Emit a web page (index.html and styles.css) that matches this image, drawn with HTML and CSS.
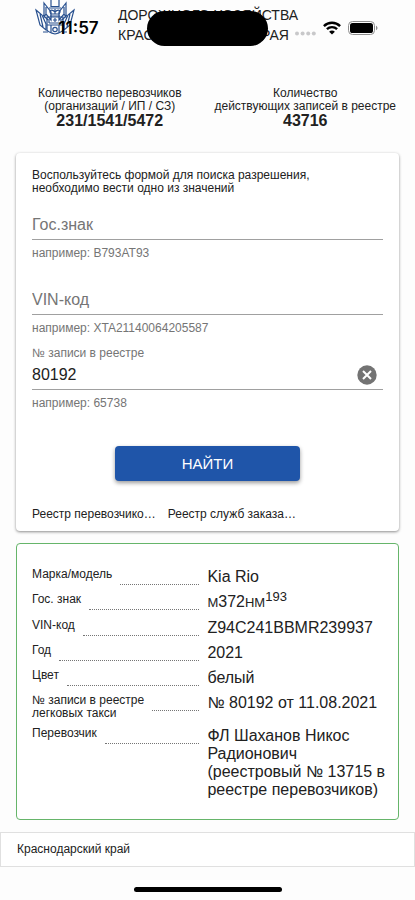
FILE: index.html
```html
<!DOCTYPE html>
<html lang="ru">
<head>
  <meta charset="UTF-8" />
  <meta name="viewport" content="width=device-width, initial-scale=1" />
  <title>Реестр такси</title>
  <link rel="stylesheet" href="styles.css">
</head>
<body>
  <div class="status-bar">
    <span class="time">11:57</span>
    <span class="island"></span>
    <span class="status-icons">
      <svg class="dots" width="21" height="5" viewBox="0 0 21 5" fill="#c8c8ca">
        <circle cx="2" cy="2.5" r="2" /><circle cx="7.6" cy="2.5" r="2" /><circle cx="13.2" cy="2.5" r="2" /><circle cx="18.8" cy="2.5" r="2" />
      </svg>
      <svg width="18" height="14" viewBox="0 0 18 14" fill="none" stroke="#000" stroke-width="2.4">
        <path d="M.9 5.1C5.4.7 12.6.7 17.1 5.1" />
        <path d="M3.9 8.2c2.9-2.8 7.3-2.8 10.2 0" />
        <path d="M9 13.6 6.1 10.7c1.6-1.5 4.2-1.5 5.8 0z" fill="#000" stroke="none" />
      </svg>
      <svg width="30" height="14" viewBox="0 0 30 14">
        <rect x=".5" y=".5" width="26" height="13" rx="4" fill="none" stroke="#8e8e8e" />
        <rect x="2" y="2" width="23" height="10" rx="2.6" />
        <path d="M28 4.8v4.4c.9-.4 1.5-1.2 1.5-2.2S28.9 5.200 28 4.800z" fill="#8e8e8e" />
      </svg>
    </span>
  </div>

  <header class="header">
    <svg class="emblem" width="40" height="35" viewBox="0 0 40 35" fill="none" stroke="#28508f" stroke-width="1.2">
      <!-- crown -->
      <path d="M16 0v6.500h8V0M14 8h12" />
      <path d="M16 14c-3-4 1-5 4-2 3-3 7-2 4 2zM20 9v5M15 16h10" />
      <!-- flags -->
      <path d="M1 10l6 5 4 9v6l-6-5zM5 14l3 13" />
      <path d="M9 3l7 9v8l-5-6-2 3zM11 7v8M8 15l5 5" />
      <path d="M39 10l-6 5-4 9v6l6-5zM35 14l-3 13" />
      <path d="M31 3l-7 9v8l5-6 2 3zM29 7v8M32 15l-5 5" />
      <!-- shield -->
      <path d="M12 17h16v13c-1 2-4 3-8 4-4-1-7-2-8-4zM12 25h16M16 25v8M24 25v8M20 18v4M18 20h4" />
      <path d="M14 19v4M26 19v4M14 23h12M8 32h5M32 32h-5" />
      <circle cx="20" cy="29.500" r="2.200" />
    </svg>
    <div class="header-title">ДОРОЖНОГО ХОЗЯЙСТВА<br>КРАСНОДАРСКОГО КРАЯ</div>
  </header>

  <main>
    <section class="stats">
      <div class="stat">
        <div>Количество перевозчиков<br>(организаций / ИП / СЗ)</div>
        <div class="stat-value">231/1541/5472</div>
      </div>
      <div class="stat">
        <div>Количество<br>действующих записей в реестре</div>
        <div class="stat-value">43716</div>
      </div>
    </section>

    <form class="card search">
      <p class="search-text">Воспользуйтесь формой для поиска разрешения,<br>необходимо вести одно из значений</p>

      <div class="field">
        <input type="text" id="plate" placeholder="Гос.знак" aria-label="Гос.знак" />
        <div class="hint">например: B793AT93</div>
      </div>
      <div class="field">
        <input type="text" id="vin" placeholder="VIN-код" aria-label="VIN-код" />
        <div class="hint">например: XTA21140064205587</div>
      </div>
      <div class="field">
        <label for="record">№ записи в реестре</label>
        <div class="input-row">
          <input type="text" id="record" value="80192" />
          <button type="button" class="clear" aria-label="Очистить">
            <svg width="20" height="20" viewBox="0 0 20 20">
              <circle cx="10" cy="10" r="9.7" fill="#737373" />
              <path d="M6 6l8 8M14 6l-8 8" stroke="#fff" stroke-width="2" />
            </svg>
          </button>
        </div>
        <div class="hint">например: 65738</div>
      </div>

      <button type="button" class="submit">НАЙТИ</button>

      <div class="links">
        <a href="#">Реестр перевозчико…</a>
        <a href="#">Реестр служб заказа…</a>
      </div>
    </form>

    <dl class="card result">
      <div class="row"><dt><span>Марка/модель</span></dt><dd>Kia Rio</dd></div>
      <div class="row"><dt><span>Гос. знак</span></dt><dd><small>М</small>372<small>НМ</small><sup>193</sup></dd></div>
      <div class="row"><dt><span>VIN-код</span></dt><dd>Z94C241BBMR239937</dd></div>
      <div class="row"><dt><span>Год</span></dt><dd>2021</dd></div>
      <div class="row"><dt><span>Цвет</span></dt><dd>белый</dd></div>
      <div class="row"><dt><span>№ записи в реестре<br>легковых такси</span></dt><dd>№ 80192 от 11.08.2021</dd></div>
      <div class="row"><dt><span>Перевозчик</span></dt><dd>ФЛ Шаханов Никос Радионович (реестровый № 13715 в реестре перевозчиков)</dd></div>
    </dl>
  </main>

  <footer class="footer">Краснодарский край</footer>
  <div class="home-indicator"></div>
</body>
</html>
```
FILE: styles.css
```css
* {
  box-sizing: border-box;
}

body {
  margin: 0;
  background: #fdfdfd;
  color: #212121;
  font-family: "Liberation Sans", Arial, sans-serif;
  font-size: 12px;
  line-height: 13px;
}

/* phone status bar, lies over the page header */
.status-bar {
  position: absolute;
  top: 0;
  left: 0;
  width: 100%;
  height: 56px;
  display: grid;
  grid-template-columns: 1fr 121px 1fr;
  align-items: center;
  color: #000;
}

.time {
  padding-left: 10px;
  font-family: Inter, sans-serif;
  font-size: 17px;
  font-weight: 600;
  text-align: center;
}

.island {
  height: 35px;
  border-radius: 18px;
  background: #000;
}

.status-icons {
  display: flex;
  align-items: center;
  justify-content: center;
  gap: 7px;
  padding-right: 10px;
}

.dots {
  margin-top: 10px;
}

.header {
  display: flex;
  align-items: flex-start;
  gap: 43px;
  padding: 0 35px;
}

.emblem {
  flex-shrink: 0;
}

.header-title {
  padding-top: 5px;
  font-size: 14px;
  line-height: 20px;
  white-space: nowrap;
}

.stats {
  display: grid;
  grid-template-columns: 1fr 1fr;
  padding: 42px 12px 24px;
  text-align: center;
}

.stat {
  white-space: nowrap;
}

.stat-value {
  font-size: 16px;
  font-weight: bold;
  line-height: 16px;
}

.card {
  margin: 0 16px 12px;
  border-radius: 4px;
  background: #fff;
}

.search {
  padding: 16px 16px 8px;
  box-shadow: 0 1px 3px rgba(0, 0, 0, 0.45);
}

.search-text {
  margin: 0;
  font-size: 12px;
}

.field {
  display: grid;
  grid-template-rows: 15px 30px 30px;
  color: #757575;
}

.field label {
  line-height: 16px;
}

.field input {
  grid-row: 2;
  width: 100%;
  height: 30px;
  padding: 0;
  border: 0;
  border-bottom: 1px solid #a0a0a0;
  border-radius: 0;
  outline: 0;
  background: none;
  color: #212121;
  font: inherit;
  font-size: 16px;
}

.field input::placeholder {
  color: #757575;
  opacity: 1;
}

.hint {
  grid-row: 3;
  padding-top: 7px;
}

.input-row {
  display: flex;
  align-items: center;
  border-bottom: 1px solid #a0a0a0;
}

.field .input-row input {
  height: 29px;
  border: 0;
}

.clear {
  display: flex;
  padding: 0 6px;
  border: 0;
  background: none;
}

.submit {
  display: block;
  width: 185px;
  height: 35px;
  margin: 26px auto 24px;
  border: 0;
  border-radius: 4px;
  background: #1f55a9;
  box-shadow: 0 2px 4px rgba(0, 0, 0, 0.4);
  color: #fff;
  font: inherit;
  font-size: 15px;
}

.links {
  display: flex;
  gap: 12px;
  line-height: 18px;
}

.links a {
  color: #212121;
  text-decoration: none;
  white-space: nowrap;
}

.result {
  padding: 24px 8px 13px 15px;
  border: 1px solid #66b56a;
}

.row {
  display: grid;
  grid-template-columns: 49% 51%;
  padding-bottom: 7px;
}

dt {
  display: flex;
  align-items: flex-start;
  gap: 8px;
  padding-right: 8px;
  white-space: nowrap;
}

/* dotted leader up to the value column */
dt::after {
  content: "";
  flex: 1;
  height: 16px;
  border-bottom: 1px dotted #757575;
}

dd {
  margin: 0;
  font-size: 16px;
  line-height: 18px;
}

dd small {
  font-size: 13px;
}

dd sup {
  font-size: 13px;
  line-height: 0;
}

.footer {
  padding: 10px 16px;
  border: 1px solid #e0e0e0;
  background: #fff;
}

.home-indicator {
  width: 148px;
  height: 5px;
  margin: 20px auto 0;
  border-radius: 3px;
  background: #000;
}
```
